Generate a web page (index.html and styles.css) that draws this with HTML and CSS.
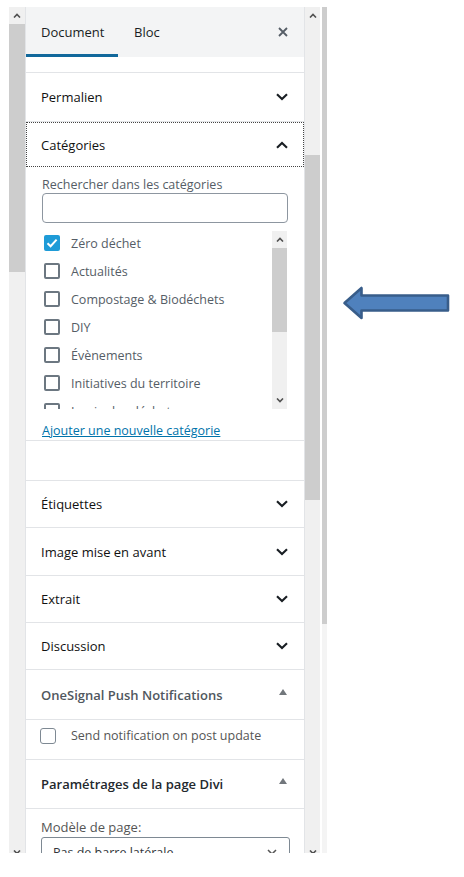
FILE: index.html
```html
<!DOCTYPE html>
<html lang="fr">
<head>
<meta charset="utf-8">
<title>Document</title>
<link rel="stylesheet" href="styles.css">
</head>
<body>
<div class="frame">
  <div class="sb sb-left">
    <div class="sb-btn"><svg viewBox="0 0 8 5"><path d="M1 4.5L4 1.5L7 4.5" fill="none" stroke="#505050" stroke-width="1.6"/></svg></div>
    <div class="sb-thumb thumb-left"></div>
    <div class="sb-track"></div>
    <div class="sb-btn down"><svg viewBox="0 0 8 5"><path d="M1 0.5L4 3.5L7 0.5" fill="none" stroke="#505050" stroke-width="1.6"/></svg></div>
  </div>

  <div class="panel">
    <div class="tabs">
      <div class="tab tab-doc active">Document</div>
      <div class="tab tab-bloc">Bloc</div>
      <div class="close"><svg viewBox="0 0 10 10"><path d="M1 1L9 9M9 1L1 9" stroke="#555d66" stroke-width="1.8"/></svg></div>
    </div>
    <div class="peek"></div>

    <div class="pb">
      <div class="pb-head h-perma"><span>Permalien</span><svg class="chev" viewBox="0 0 12 8"><path d="M1 1.2L6 6L11 1.2" fill="none" stroke="#191e23" stroke-width="2.1"/></svg></div>
    </div>

    <div class="pb">
      <div class="pb-head h-cat focus"><span>Catégories</span><svg class="chev" viewBox="0 0 12 8"><path d="M1 6.8L6 2L11 6.8" fill="none" stroke="#191e23" stroke-width="2.1"/></svg></div>
      <div class="cat-body">
        <label class="cat-label">Rechercher dans les catégories</label>
        <div class="search"></div>
        <div class="cat-list">
          <div class="cat-items">
            <div class="row"><span class="cb checked"><svg viewBox="0 0 16 16"><path d="M3.5 8.2L6.6 11.2L12.6 4.6" fill="none" stroke="#fff" stroke-width="2"/></svg></span><span class="lbl">Zéro déchet</span></div>
            <div class="row"><span class="cb"></span><span class="lbl">Actualités</span></div>
            <div class="row"><span class="cb"></span><span class="lbl">Compostage &amp; Biodéchets</span></div>
            <div class="row"><span class="cb"></span><span class="lbl">DIY</span></div>
            <div class="row"><span class="cb"></span><span class="lbl">Évènements</span></div>
            <div class="row"><span class="cb"></span><span class="lbl">Initiatives du territoire</span></div>
            <div class="row"><span class="cb"></span><span class="lbl">La vie des déchets</span></div>
          </div>
          <div class="list-sb">
            <div class="lsb-btn"><svg viewBox="0 0 8 5"><path d="M1 4.5L4 1.5L7 4.5" fill="none" stroke="#505050" stroke-width="1.6"/></svg></div>
            <div class="lsb-thumb"></div>
            <div class="sb-track"></div>
            <div class="lsb-btn"><svg viewBox="0 0 8 5"><path d="M1 0.5L4 3.5L7 0.5" fill="none" stroke="#505050" stroke-width="1.6"/></svg></div>
          </div>
        </div>
        <a class="add-link" href="#">Ajouter une nouvelle catégorie</a>
      </div>
    </div>

    <div class="pb empty"></div>

    <div class="pb"><div class="pb-head h46"><span>Étiquettes</span><svg class="chev" viewBox="0 0 12 8"><path d="M1 1.2L6 6L11 1.2" fill="none" stroke="#191e23" stroke-width="2.1"/></svg></div></div>
    <div class="pb"><div class="pb-head h47"><span>Image mise en avant</span><svg class="chev" viewBox="0 0 12 8"><path d="M1 1.2L6 6L11 1.2" fill="none" stroke="#191e23" stroke-width="2.1"/></svg></div></div>
    <div class="pb"><div class="pb-head h46"><span>Extrait</span><svg class="chev" viewBox="0 0 12 8"><path d="M1 1.2L6 6L11 1.2" fill="none" stroke="#191e23" stroke-width="2.1"/></svg></div></div>
    <div class="pb"><div class="pb-head h46"><span>Discussion</span><svg class="chev" viewBox="0 0 12 8"><path d="M1 1.2L6 6L11 1.2" fill="none" stroke="#191e23" stroke-width="2.1"/></svg></div></div>

    <div class="mb">
      <div class="mb-head h-one"><span class="mb-title one">OneSignal Push Notifications</span><span class="tri"></span></div>
      <div class="mb-body one-body"><span class="cb-wp"></span><span class="lbl">Send notification on post update</span></div>
    </div>

    <div class="mb">
      <div class="mb-head h-divi"><span class="mb-title divi">Paramétrages de la page Divi</span><span class="tri"></span></div>
      <div class="divi-body">
        <div class="field-label">Modèle de page:</div>
        <div class="select"><span>Pas de barre latérale</span><svg viewBox="0 0 10 6"><path d="M1 1L5 5L9 1" fill="none" stroke="#555" stroke-width="1.5"/></svg></div>
      </div>
    </div>
  </div>

  <div class="sb sb-right">
    <div class="sb-btn"><svg viewBox="0 0 8 5"><path d="M1 4.5L4 1.5L7 4.5" fill="none" stroke="#505050" stroke-width="1.6"/></svg></div>
    <div class="gap-right"></div>
    <div class="sb-thumb thumb-right"></div>
    <div class="sb-track"></div>
    <div class="sb-btn down"><svg viewBox="0 0 8 5"><path d="M1 0.5L4 3.5L7 0.5" fill="none" stroke="#505050" stroke-width="1.6"/></svg></div>
  </div>

  <div class="strip">
    <div class="strip-fill"></div>
    <div class="strip-rest"></div>
  </div>

  <div class="annot">
    <svg class="arrow" viewBox="0 0 112 38">
      <polygon points="2.5,19 19.5,4 19.5,11.5 106,11.5 106,26.5 19.5,26.5 19.5,34" fill="#4f81bd" stroke="#385d8a" stroke-width="2.6" stroke-linejoin="round"/>
    </svg>
  </div>
</div>
</body>
</html>
```

FILE: styles.css
```css
* { box-sizing: border-box; }
html, body { margin: 0; padding: 0; background: #fff; }
body {
  font-family: "Open Sans", "Noto Sans", "Liberation Sans", sans-serif;
  font-size: 12.5px;
  color: #191e23;
}

.frame { display: flex; margin-top: 7px; height: 846px; }

/* window scrollbars */
.sb { display: flex; flex-direction: column; background: #f0f0f0; overflow: hidden; flex: none; }
.sb-left { margin-left: 9px; width: 16px; }
.sb-right { width: 15px; }
.sb-btn { height: 17px; flex: none; display: flex; align-items: center; justify-content: center; }
.sb-btn svg { width: 8px; height: 5px; display: block; }
.sb-btn.down { margin-bottom: -8px; }
.sb-thumb { background: #cdcdcd; flex: none; }
.thumb-left { height: 248px; }
.gap-right { height: 131px; flex: none; }
.thumb-right { height: 345px; }
.sb-track { flex: 1; }

.strip { width: 5px; margin-left: 2px; display: flex; flex-direction: column; flex: none; }
.strip-fill { height: 617px; background: #cdcdcd; }
.strip-rest { flex: 1; background: #f4f4f4; }

.annot { flex: 1; }
.arrow { display: block; width: 112px; height: 38px; margin: 277px 0 0 15px; }

/* panel */
.panel {
  width: 280px; flex: none;
  border-left: 1px solid #e2e4e7; border-right: 1px solid #e2e4e7;
  background: #fff; overflow: hidden;
  display: flex; flex-direction: column;
}
.tabs { height: 50px; flex: none; background: #f3f4f5; display: flex; font-size: 13px; }
.tab {
  display: flex; align-items: center;
  padding-top: 3px; border-bottom: 3px solid transparent;
  color: #191e23;
}
.tab-doc { width: 92px; padding-left: 15px; }
.tab-bloc { padding-left: 16px; }
.tab.active { border-bottom-color: #11689b; }
.close { margin-left: auto; margin-right: 16px; display: flex; align-items: center; }
.close svg { width: 10px; height: 10px; display: block; }

.peek { height: 16px; flex: none; border-bottom: 1px solid #e2e4e7; }

.pb { flex: none; border-bottom: 1px solid #e2e4e7; }
.pb-head {
  display: flex; align-items: center; justify-content: space-between;
  padding: 0 16px 0 15px; font-weight: 500; font-size: 13px; color: #111;
}
.chev { width: 12px; height: 8px; display: block; }
.h-perma { height: 48px; }
.h-cat { height: 45px; }
.focus { outline: 1px dotted #444; outline-offset: -1px; }
.h46 { height: 46px; }
.h47 { height: 47px; }

.cat-body { padding: 10px 16px 0 16px; }
.cat-label { display: block; line-height: 16px; color: #555d66; }
.search { height: 30px; border: 1px solid #8d96a0; border-radius: 4px; }
.cat-list { display: flex; height: 178px; margin-top: 8px; }
.cat-items { flex: 1; overflow: hidden; padding-left: 2px; }
.row { height: 28px; padding-bottom: 4px; display: flex; align-items: center; }
.cb {
  width: 16px; height: 16px; flex: none;
  border: 2px solid #6c7781; border-radius: 2px; background: #fff;
}
.cb.checked { background: #1e9bd7; border-color: #1e9bd7; position: relative; }
.cb.checked svg { position: absolute; left: -2px; top: -2px; width: 16px; height: 16px; }
.lbl { margin-left: 11px; color: #555d66; white-space: nowrap; }

.list-sb { width: 15px; margin-right: 1px; background: #f0f0f0; display: flex; flex-direction: column; flex: none; }
.lsb-btn { height: 17px; flex: none; display: flex; align-items: center; justify-content: center; }
.lsb-btn svg { width: 8px; height: 5px; display: block; }
.lsb-thumb { height: 84px; background: #cdcdcd; flex: none; }

.add-link { display: block; margin-top: 13px; line-height: 18px; color: #0073aa; text-decoration: underline; }

.empty { height: 40px; }

/* classic metaboxes */
.mb { flex: none; border-bottom: 1px solid #e2e4e7; }
.mb-head { display: flex; align-items: center; justify-content: space-between; padding: 0 17px 0 15px; font-size: 13px; }
.h-one { height: 50px; border-bottom: 1px solid #e2e4e7; }
.h-divi { height: 49px; border-bottom: 1px solid #e2e4e7; }
.mb-title.one { font-weight: 600; color: #50575e; }
.mb-title.divi { font-weight: 600; color: #23282d; }
.tri {
  width: 0; height: 0; margin-top: -6px;
  border-left: 4px solid transparent; border-right: 4px solid transparent;
  border-bottom: 6px solid #72777c;
}
.one-body { height: 39px; padding: 8px 0 0 14px; display: flex; align-items: flex-start; }
.one-body .lbl { line-height: 16px; margin-left: 15px; color: #555; }
.cb-wp { width: 16px; height: 16px; border: 1px solid #7e8993; border-radius: 3px; flex: none; }
.mb + .mb { border-bottom: none; }

.divi-body { padding: 9px 14px 0 15px; }
.field-label { line-height: 18px; color: #555; font-size: 13px; }
.select {
  margin-top: 1px; height: 30px; border: 1px solid #7e8993; border-radius: 3px;
  display: flex; align-items: center; justify-content: space-between;
  padding: 0 12px 0 11px; color: #32373c;
}
.select svg { width: 10px; height: 6px; display: block; }
```
